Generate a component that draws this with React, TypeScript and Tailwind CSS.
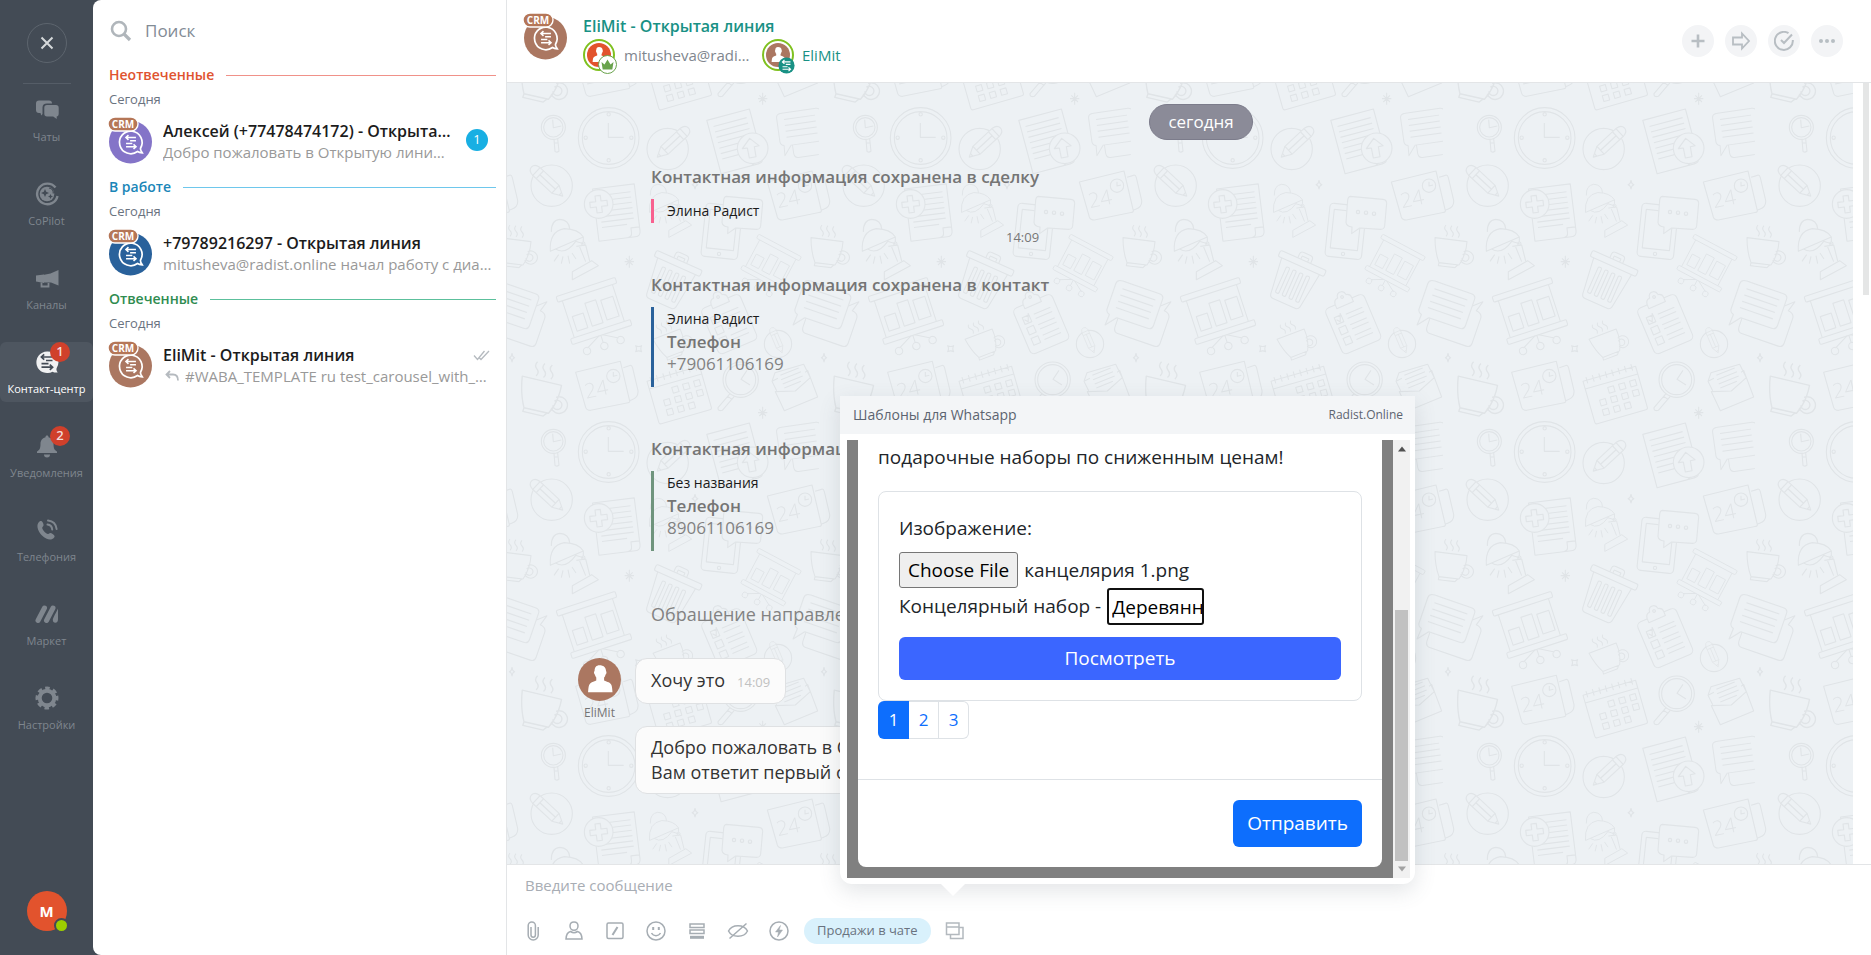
import { useRef, useState } from 'react';
import type { ReactNode } from 'react';

/* ---------- Icons ---------- */

function SearchIcon() {
  return (
    <svg width="22" height="22" viewBox="0 0 22 22" fill="none" stroke="#b0b6bb" strokeWidth="2.6">
      <circle cx="9" cy="9" r="7" />
      <path d="M14 14l6 6" strokeWidth="3.2" />
    </svg>
  );
}

function LinesArrows() {
  return <path d="M-5.5-5H5.5M-2.8-7.600l-2.800 2.600 2.800 2.600M-1-1.500H5.500M-5.500 1.700H1.500M-5.500 5.200H5.500M2.800 2.600l2.800 2.600-2.800 2.600" />;
}

function LineAvatar({ color }: { color: string }) {
  return (
    <svg width="46" height="48" viewBox="0 0 46 48" className="shrink-0">
      <circle cx="24.5" cy="26" r="21.5" fill={color} />
      <g transform="translate(25 26)" fill="none" stroke="#fff" strokeWidth="1.7">
        <path d="M6.500 9.500A11.300 11.300 0 1 1 9.600 6c-.6 1.200.4 3 1.600 4.800-1.900 0-3.400-.3-4.700-1.300z" />
        <g transform="scale(.9)">
          <LinesArrows />
        </g>
      </g>
      <rect x="2" y="1" width="30" height="14" rx="7" fill="#b57657" stroke="#fff" strokeWidth="1.400" />
      <text x="17" y="12" textAnchor="middle" fontSize="10" fontWeight="700" fill="#fff" fontFamily="'Open Sans', sans-serif">
        CRM
      </text>
    </svg>
  );
}

function Person({ color, size }: { color: string; size: number }) {
  return (
    <svg width={size} height={size} viewBox="0 0 44 44">
      <circle cx="22" cy="22" r="22" fill={color} />
      <path
        d="M22 7.500c-3.300 0-5 2.200-5 5.400 0 1-.8 1-.6 2.400.1 1 .8 1.300 1 2 .5 1.500.8 2 1.300 2.600v3c-3.300 1.500-6.400 2-7.300 4.600-.7 2-.9 4.500-1.100 7.500h25c-.2-3-.4-5.500-1.100-7.500-.9-2.600-4.200-3.100-7.500-4.600v-3c.8-.6 1-1.100 1.300-2.600.4-.7 1-1 1.100-2 .2-1.400-.5-1.400-.5-2.400 0-3.200-2.600-5.400-6.600-5.400z"
        fill="#fff"
      />
    </svg>
  );
}

const menuIcons: Record<string, ReactNode> = {
  chats: (
    <g fill="currentColor">
      <path d="M4 2.500h10c2 0 3 1 3 3H12c-3 0-4.500 1.500-4.500 4V16l-1.300 1.500L5.500 15H4c-2 0-3-1-3-3V5.500c0-2 1-3 3-3z" />
      <path d="M12 7h9c1.700 0 2.700 1 2.700 2.700v6c0 1.700-.8 2.500-2 2.800V21l-3.500-2.500H12c-1.700 0-2.700-1-2.700-2.800v-6C9.300 8 10.300 7 12 7z" />
    </g>
  ),
  copilot: (
    <g>
      <path d="M20.500 5.500A10.300 10.300 0 1 0 22.500 14" fill="none" stroke="currentColor" strokeWidth="2.400" />
      <circle cx="12" cy="12" r="7.300" fill="currentColor" />
      <path d="M10 7l1.200 2.800L14 11l-2.800 1.200L10 15l-1.200-2.800L6 11l2.800-1.200zM15.500 12l.8 1.700 1.700.8-1.700.8-.8 1.700-.8-1.700-1.700-.8 1.700-.8z" fill="#434b55" />
      <path d="M14 6c3 .3 4.500 3 4.300 5.500" fill="none" stroke="#434b55" strokeWidth="1.200" />
    </g>
  ),
  channels: (
    <g fill="currentColor">
      <path d="M23.500 4v15.500L16 16.500H8V9l7.500-1.500z" />
      <path d="M1 9.500L9 8.500v8.500L1 15.500z" />
      <path d="M6.500 16.500v4h7v-3.500" fill="none" stroke="currentColor" strokeWidth="1.800" />
    </g>
  ),
  contact: (
    <g>
      <path d="M12 1.500a10.800 10.800 0 1 0 5.500 20.200c1.600 1 3.500 1 5.200.8-1.200-1.500-1.600-3-1-4.500A10.800 10.800 0 0 0 12 1.500z" fill="#f0f1f2" />
      <g transform="translate(12 12)" fill="none" stroke="#434b55" strokeWidth="1.700">
        <LinesArrows />
      </g>
    </g>
  ),
  bell: (
    <g fill="currentColor">
      <path d="M12 1.500c1 0 1.500.7 1.500 1.700 3.500.8 5 3.500 5 6.800 0 4.500 1 6 3.500 7.500v1.500H2v-1.500c2.500-1.500 3.500-3 3.500-7.500 0-3.300 1.500-6 5-6.800 0-1 .5-1.700 1.500-1.700z" />
      <path d="M9 20.500h6a3 3 0 0 1-6 0z" />
    </g>
  ),
  phone: (
    <g>
      <path d="M4.500 3.500C6 2.500 7 3 8 5c1 2 .6 3-.5 4-.8.7 0 2.500 1.700 4.500 1.800 2 3.500 3 4.500 2.200 1.300-1 2.300-1 4 .3 2 1.500 2.500 2.500 1.300 3.800-2.500 3-7.500 2.200-12-2.300C2.300 12.700.8 6.500 4.500 3.500z" fill="currentColor" />
      <path d="M12.500 6.500c3 .3 4.500 2 4.700 5M13 2.500c5 .5 8 3.500 8.600 8.500" fill="none" stroke="currentColor" strokeWidth="2" strokeLinecap="round" />
    </g>
  ),
  market: (
    <g stroke="currentColor" strokeWidth="5" strokeLinecap="round">
      <path d="M3 18.500L9.500 6M11.500 18.500L18 6" />
      <path d="M23 6.500v11c0 2-1.200 3.300-2.700 3.300s-2.500-1.200-2.500-3c0-1.800 4-8.300 5.200-11.300z" fill="currentColor" stroke="none" />
    </g>
  ),
  gear: (
    <g fill="none" stroke="currentColor">
      <circle cx="12" cy="12" r="7.300" strokeWidth="4" />
      <circle cx="12" cy="12" r="9.900" strokeWidth="3.200" strokeDasharray="4.400 3.375" transform="rotate(-12 12 12)" />
    </g>
  ),
};

/* ---------- Chat wallpaper ---------- */

const BG = '#edf1f4';

function Wallpaper() {
  return (
    <svg className="absolute inset-0 h-full w-full" aria-hidden="true">
      <defs>
        <g id="wp-pencil">
          <path fill={BG} d="M-48-16H32L62 0 32 16H-48Q-66 14-66 0T-48-16z" />
          <path d="M-46-16v32M-32-16v32M32-16v32M-32 0H32M52-5v10" />
        </g>
        <g id="wp-cup">
          <path d="M-48-42L48-30Q45 10 24 40L-36 33Q-48 0-48-42zM-36 33l-2 9 50 6 8-8M38 0a20 20 0 1 1-9 26M35 10a11 11 0 1 1-3 10M-15-80q-8 9 0 17t0 17M3-78q-8 9 0 17t0 17M21-76q-8 9 0 17t0 17" />
        </g>
        <g id="wp-sheet">
          <path d="M781 297L915 264 943 383Q944 387 938 388L826 411Q814 411 811 402zM924 283l22-7q4 0 6 8l16 68q2 20-18 27l-8 3" />
          <circle cx="894" cy="308" r="20" />
          <path d="M894 296v13l12-3" />
          <text x="813" y="376" transform="rotate(-12 813 376)" fontSize="62" fontWeight="300" fill="#e0e4e7" stroke="none" fontFamily="'Open Sans', sans-serif">
            24
          </text>
        </g>
        <g id="wp-board">
          <rect x="-94" y="-76" width="186" height="18" rx="4" />
          <path d="M-80-58V58M78-58V58M-8 76l-44 24M-2 76v24M4 76l42 24" />
          <rect x="-92" y="58" width="188" height="18" rx="4" />
          <rect x="-66" y="-4" width="34" height="46" />
          <rect x="-18" y="-30" width="34" height="72" />
          <rect x="30" y="-24" width="38" height="62" />
          <circle cx="-56" cy="108" r="11" />
          <circle cx="-2" cy="110" r="11" />
          <circle cx="50" cy="108" r="11" />
        </g>
        <g id="wp-bubbles">
          <path d="M68-20l30-26-10 32q20 2 20 18v78q0 14-14 14H-22q-14 0-14-18V52" />
          <path fill={BG} d="M-58-58H58q14 0 14 14v82q0 14-14 14H-40L-66 84l2-34q-12-3-12-14v-80q0-14 18-14z" />
          <path d="M-52-36H52M-52-16H52M-52 4H52M-52 24H52" />
        </g>
        <g id="wp-doc">
          <path d="M-60-80H66V62q0 16-16 16H-60zM66 50H40v14q0 14-14 14M-46-58H52M-46-42H52M-46-26H52M-46-10H52M-46 6H52M-46 22H52M-46 38H30" />
        </g>
        <g id="wp-lamp">
          <path d="M130 505Q126 445 172 437 214 438 229 462zM133 447Q132 412 158 409 186 410 188 438M146 498q30 20 62-25M205 475l25 7M229 462v15M208 490l28-4 12 48M218 492l18 44M196 590v-24l58-33 20 15zM155 515l-14 20M168 520l-5 22M183 518l5 24M195 510l12 18" />
          <circle cx="229" cy="482" r="5" />
        </g>
        <g id="wp-doodles">
          <circle cx="134" cy="308" r="62" />
          <use href="#wp-pencil" transform="translate(122 297) rotate(43)" />
          <use href="#wp-doc" transform="translate(326 390) rotate(-7)" />
          <circle cx="275" cy="363" r="43" fill={BG} />
          <path d="M267 338h16v17h18v16h-18v18h-16v-18h-18v-16h18z" transform="rotate(-7 275 363)" />
          <use href="#wp-lamp" />
          <use href="#wp-lamp" transform="translate(313 -56) scale(.88)" />
          <use href="#wp-sheet" />
          <use href="#wp-sheet" transform="translate(-575 571)" />
          <use href="#wp-cup" transform="translate(960 506)" />
          <use href="#wp-cup" transform="translate(100 938) rotate(6) scale(1.250)" />
          <use href="#wp-cup" transform="translate(494 782) rotate(-28) scale(.9)" />

          <g transform="translate(643 447) rotate(6)">
            <rect x="-54" y="-82" width="110" height="160" rx="12" />
            <rect x="-40" y="-64" width="82" height="116" />
            <circle cx="0" cy="66" r="5" />
          </g>
          <path fill={BG} d="M658 340l98 9q11 1 11 12l-6 68q-2 11-13 10l-62-4-24 17 1-20q-17-2-18-14l5-66q1-11 8-12z" />
          <circle cx="681" cy="387" r="5" />
          <circle cx="705" cy="389" r="5" />
          <circle cx="729" cy="392" r="5" />

          <g transform="translate(490 592) rotate(24)">
            <rect x="-74" y="-66" width="150" height="20" rx="6" />
            <path d="M-62-46l14 112q2 10 12 10h72q10 0 12-10L62-46M-18-66v-12q0-10 10-10h22q10 0 10 10v12M-8-66v-10H14v10" />
            <rect x="-38" y="-28" width="11" height="84" rx="4" />
            <rect x="-16" y="-28" width="11" height="84" rx="4" />
            <rect x="6" y="-28" width="11" height="84" rx="4" />
            <rect x="28" y="-28" width="11" height="84" rx="4" />
          </g>
          <use href="#wp-board" transform="translate(260 684) rotate(-18)" />
          <use href="#wp-board" transform="translate(792 540) rotate(28) scale(.78)" />

          <g transform="translate(665 722) rotate(-23)">
            <rect x="-62" y="-72" width="126" height="148" rx="14" />
            <path fill={BG} d="M-26-60v-14q2-14 14-14 2-14 14-14t14 14q12 2 12 14v14z" />
            <circle cx="2" cy="-86" r="4" />
            <path d="M-44-38h22v22h-22zM-44-4h22v22h-22zM-44 30h22v22h-22zM-40-30l8 10 10-24M-8-34H46M-8-20H46M-8 0H46M-8 14H46M-8 34H46M-8 48H46" />
          </g>
          <circle cx="813" cy="783" r="41" />
          <use href="#wp-pencil" transform="translate(810 773) rotate(67) scale(.64)" />
          <use href="#wp-bubbles" transform="translate(948 668) rotate(19)" />
          <use href="#wp-bubbles" transform="translate(882 1077) rotate(-8) scale(.9)" />

          <g transform="translate(516 932) rotate(-16)">
            <path d="M-82-62H82V66q0 6-6 6H-76q-6 0-6-6zM-82-38H82M-70-72v20M-50-72v20M-30-72v20M-10-72v20M10-72v20M30-72v20M50-72v20M70-72v20" />
            <path d="M-16-24h18v18h-18zM18-24h18v18H18zM52-24h18v18H52zM-50 6h18v18h-18zM-16 6h18v18h-18zM18 6h18v18H18zM52 6h18v18H52zM-50 36h18v18h-18zM-16 36h18v18h-18zM18 36h18v18H18z" />
          </g>
          <circle cx="701" cy="890" r="53" />
          <circle cx="701" cy="890" r="45" />
          <path d="M720 862l-18 27 27 17M669 932l-36 42q-1 12 13 8l36-42M662 940l14 10" />
          <circle cx="139" cy="1075" r="36" />
          <circle cx="139" cy="1075" r="29" />
          <path d="M137 1052l2 24 24-5M141 1111l3 36q6 5 12-1l-4-36M143 1122h11" />
          <circle cx="305" cy="1107" r="91" />
          <circle cx="305" cy="1107" r="79" />
          <circle cx="305" cy="1036" r="5" />
          <circle cx="305" cy="1174" r="5" />
          <circle cx="236" cy="1106" r="5" />
          <circle cx="373" cy="1106" r="5" />
          <path d="M304 1062v43h46" />
          <circle cx="482" cy="1140" r="62" />
          <use href="#wp-pencil" transform="translate(496 1122) rotate(137)" />
          <use href="#wp-doc" transform="translate(682 1119) rotate(-15) scale(1.050)" />
          <circle cx="737" cy="1138" r="46" fill={BG} />
          <path d="M728 1108l28 22-14 3 5 30-20 4-6-30-15 2z" />
          <path d="M795 895l18-9M809 923l-14-28 9-26 86-25 20 40-45 40-60 2 27 57 100-41-30-80-8 6M822 890l60-24M827 903l60-24M820 877l55-22M832 915l50-20" />

          <path d="M564 292q1 11 9 13-8 2-9 13-1-11-9-13 8-2 9-13zM951 811q1 11 8 13-7 2-8 13-1-11-8-13 7-2 8-13zM386 788q9 5 18 0-5 9 0 18-9-5-18 0 5-9 0-18zM367 518v36M353 536h28M357 526l20 20M377 526l-20 20M767 971v36M753 989h28M757 979l20 20M777 979l-20 20" />
        </g>
        <pattern id="wp-tile" x="69" y="249" width="936" height="942" patternUnits="userSpaceOnUse" patternTransform="translate(-23 -83) scale(.33333)">
          <g fill="none" stroke="#e0e4e7" strokeWidth="3.300" strokeLinejoin="round">
            <use href="#wp-doodles" />
            <use href="#wp-doodles" x="-936" />
            <use href="#wp-doodles" x="936" />
            <use href="#wp-doodles" y="-942" />
            <use href="#wp-doodles" y="942" />
          </g>
        </pattern>
      </defs>
      <rect width="100%" height="100%" fill={BG} />
      <rect width="100%" height="100%" fill="url(#wp-tile)" />
    </svg>
  );
}

/* ---------- Left menu ---------- */

const menu = [
  { icon: 'chats', label: 'Чаты' },
  { icon: 'copilot', label: 'CoPilot' },
  { icon: 'channels', label: 'Каналы' },
  { icon: 'contact', label: 'Контакт-центр', count: 1, active: true },
  { icon: 'bell', label: 'Уведомления', count: 2 },
  { icon: 'phone', label: 'Телефония' },
  { icon: 'market', label: 'Маркет' },
  { icon: 'gear', label: 'Настройки' },
];

function Sidebar() {
  return (
    <nav className="flex w-[93px] shrink-0 flex-col items-center pt-[23px] pb-6">
      <button aria-label="Закрыть" className="flex h-10 w-10 shrink-0 items-center justify-center rounded-full border border-[#5d656e]">
        <svg width="14" height="14" viewBox="0 0 14 14" stroke="#d5d8da" strokeWidth="2">
          <path d="M1.500 1.500l11 11M12.500 1.500l-11 11" />
        </svg>
      </button>
      <div className="mt-5 mb-[6px] h-px w-12 bg-[#555d67]" />
      <ul className="flex w-full flex-col gap-6">
        {menu.map((item) => (
          <li key={item.label}>
            <a
              href="#"
              className={
                item.active
                  ? 'relative flex h-[60px] flex-col items-center rounded-md bg-[#4e5660] pt-2 text-white'
                  : 'relative flex h-[60px] flex-col items-center pt-2 text-[#7f868e]'
              }
            >
              <svg width="24" height="24" viewBox="0 0 24 24">
                {menuIcons[item.icon]}
              </svg>
              <span className="mt-[7px] text-[11px] leading-4 whitespace-nowrap">{item.label}</span>
              {item.count && (
                <span className="absolute top-0 left-[50px] flex h-5 w-5 items-center justify-center rounded-full bg-[#d0402b] text-[13px] font-semibold text-[#f3dcd9]">
                  {item.count}
                </span>
              )}
            </a>
          </li>
        ))}
      </ul>
      <button className="relative mt-auto flex h-10 w-10 items-center justify-center rounded-full bg-[#e2532d] text-[15px] font-bold text-white">
        M
        <span className="absolute -right-[2px] -bottom-[2px] h-[15px] w-[15px] rounded-full border-2 border-[#434b55] bg-[#9dcf00]" />
      </button>
    </nav>
  );
}

/* ---------- Dialog list ---------- */

const groups = [
  {
    title: 'Неотвеченные',
    titleClass: 'text-[#e0532f]',
    lineClass: 'bg-[#f09189]',
    color: '#8474c8',
    name: 'Алексей (+77478474172) - Открытая линия',
    text: 'Добро пожаловать в Открытую линию компании!',
    unread: 1,
  },
  {
    title: 'В работе',
    titleClass: 'text-[#1a86b8]',
    lineClass: 'bg-[#6ec7ec]',
    color: '#29619b',
    name: '+79789216297 - Открытая линия',
    text: 'mitusheva@radist.online начал работу с диалогом',
  },
  {
    title: 'Отвеченные',
    titleClass: 'text-[#2f8c50]',
    lineClass: 'bg-[#5cc09c]',
    color: '#ab7761',
    name: 'EliMit - Открытая линия',
    text: '#WABA_TEMPLATE ru test_carousel_with_params',
    own: true,
  },
];

function DialogList() {
  return (
    <aside className="flex w-[414px] shrink-0 flex-col rounded-l-lg border-r border-[#e3e5e7] bg-white">
      <label className="flex h-[61px] items-center gap-[13px] pl-[17px]">
        <SearchIcon />
        <input type="search" placeholder="Поиск" aria-label="Поиск" className="min-w-0 flex-1 text-[17px] outline-none placeholder:text-[#828b95]" />
      </label>
      {groups.map((g) => (
        <section key={g.title} className="mt-1 mb-[9px] pl-4">
          <div className="flex h-5 items-center gap-3 pr-[10px]">
            <h2 className={`text-sm font-semibold ${g.titleClass}`}>{g.title}</h2>
            <div className={`h-px flex-1 ${g.lineClass}`} />
          </div>
          <div className="mt-[6px] text-[13px] leading-4 text-[#6a737f]">Сегодня</div>
          <a href="#" className="-ml-[3px] mt-[9px] flex h-12 items-center gap-[11px] pr-[14px]">
            <LineAvatar color={g.color} />
            <div className="min-w-0 flex-1 pt-[2px]">
              <div className="flex items-center justify-between">
                <span className="truncate text-base leading-[22px] font-semibold text-[#1c1c1c]">{g.name}</span>
                {g.own && (
                  <svg width="17" height="11" viewBox="0 0 17 11" fill="none" stroke="#b5babf" strokeWidth="1.300" className="mr-[2px] shrink-0">
                    <path d="M1 5.500l3.500 4L11.500 1M6.500 8l1.500 1.500L16 1" />
                  </svg>
                )}
              </div>
              <div className="flex items-center gap-[6px]">
                {g.own && (
                  <svg width="14" height="12" viewBox="0 0 14 12" fill="none" stroke="#b5babf" strokeWidth="1.800" className="ml-[2px] shrink-0">
                    <path d="M5 1L1.500 4.500 5 8M1.500 4.500H8c3 0 5 2 5 6" />
                  </svg>
                )}
                <span className="truncate text-[15px] leading-5 text-[#999]">{g.text}</span>
              </div>
            </div>
            {g.unread && (
              <span className="mr-1 flex h-[22px] w-[22px] shrink-0 items-center justify-center rounded-full bg-[#18afe3] text-[13px] text-white">
                {g.unread}
              </span>
            )}
          </a>
        </section>
      ))}
    </aside>
  );
}

/* ---------- Chat ---------- */

function HeaderButton({ label, children }: { label: string; children: ReactNode }) {
  return (
    <button aria-label={label} className="flex h-8 w-8 items-center justify-center rounded-full bg-[#f3f4f6]">
      <svg width="20" height="20" viewBox="0 0 20 20" fill="none" stroke="#b8bec3" strokeWidth="2">
        {children}
      </svg>
    </button>
  );
}

function ChatHeader() {
  return (
    <header className="flex h-[83px] shrink-0 items-center justify-between border-b border-[#e3e5e7] bg-white pr-7 pl-[14px]">
      <div className="flex items-start gap-4">
        <LineAvatar color="#ab7761" />
        <div>
          <h1 className="pt-px text-base leading-[26px] font-semibold text-[#199185]">EliMit - Открытая линия</h1>
          <div className="flex h-8 items-center">
            <span className="relative mr-[9px] rounded-full border-2 border-[#7fc11f] p-[2px]">
              <Person color="#e2532d" size={24} />
              <span className="absolute -right-1 -bottom-[5px] flex h-[19px] w-[19px] items-center justify-center rounded-full border border-[#6aa34d] bg-white">
                <svg width="13" height="11" viewBox="0 0 13 11" fill="#6aa34d">
                  <path d="M.5 3l3 2.500L6.500.5l3 5 3-2.500-1.200 7.500H1.700z" />
                </svg>
              </span>
            </span>
            <a href="#" className="w-[130px] truncate pt-px text-[15px] text-[#80868e]">
              mitusheva@radist.online
            </a>
            <span className="relative mr-2 ml-[8px] rounded-full border-2 border-[#7fc11f] p-[2px]">
              <Person color="#ab7761" size={24} />
              <svg width="17" height="17" viewBox="-10 -10 20 20" className="absolute -right-[3px] -bottom-[5px]" fill="none" stroke="#fff" strokeWidth="1.600">
                <circle r="9.500" fill="#199185" stroke="none" />
                <g transform="scale(.85)">
                  <LinesArrows />
                </g>
              </svg>
            </span>
            <a href="#" className="pt-px text-[15px] text-[#199185]">
              EliMit
            </a>
          </div>
        </div>
      </div>
      <div className="flex gap-[11px]">
        <HeaderButton label="Добавить">
          <path d="M10 3.500v13M3.500 10h13" strokeWidth="2.600" />
        </HeaderButton>
        <HeaderButton label="Перенаправить">
          <path d="M2 6.500h9v-4l7 7.500-7 7.500v-4H2z" strokeWidth="1.800" />
        </HeaderButton>
        <HeaderButton label="Завершить">
          <path d="M14.500 2.200A9 9 0 1 0 18.800 9M7 9l3 3 8-8.500" />
        </HeaderButton>
        <HeaderButton label="Ещё">
          <g fill="#b8bec3" stroke="none">
            <circle cx="4" cy="10" r="2" />
            <circle cx="10" cy="10" r="2" />
            <circle cx="16" cy="10" r="2" />
          </g>
        </HeaderButton>
      </div>
    </header>
  );
}

function SystemMessage({ title, barClass, name, phone }: { title: string; barClass: string; name: string; phone?: string }) {
  return (
    <article className="w-fit">
      <h3 className="text-[17px] leading-6 font-semibold text-[#757575]">{title}</h3>
      <div className={`mt-[10px] border-l-[3px] pl-[13px] ${barClass}`}>
        <p className="text-sm leading-6 text-[#1a1a1a]">{name}</p>
        {phone && (
          <p className="pb-3 text-[17px] leading-[22px] text-[#828282]">
            <b className="font-semibold text-[#757575]">Телефон</b>
            <br />
            {phone}
          </p>
        )}
      </div>
      <time className="block pt-[6px] text-right text-[13px] leading-4 text-[#777]">14:09</time>
    </article>
  );
}

function Messages() {
  return (
    <div className="relative min-h-0 flex-1 overflow-hidden bg-white">
      <div className="relative mr-[18px] h-full overflow-hidden">
        <Wallpaper />
        <div className="relative pt-[21px]">
          <div className="pl-[42px]">
            <div className="mx-auto w-fit rounded-full border border-[#7c7c8b] bg-[#8b8b98] px-[18px] py-[5px] text-[17px] leading-6 text-white">сегодня</div>
          </div>
          <div className="mt-[25px] flex flex-col items-start gap-7 pl-[144px]">
            <SystemMessage title="Контактная информация сохранена в сделку" barClass="border-[#f8618f]" name="Элина Радист" />
            <SystemMessage title="Контактная информация сохранена в контакт" barClass="border-[#29619b]" name="Элина Радист" phone="+79061106169" />
            <SystemMessage title="Контактная информация сохранена в сделку" barClass="border-[#6f947d]" name="Без названия" phone="89061106169" />
            <p className="text-lg leading-[26px] text-[#828282]">Обращение направлено на EliMit</p>
          </div>
          <div className="mt-[31px] flex items-start gap-[14px] pl-[71px]">
            <div className="flex flex-col items-center">
              <Person color="#ab7761" size={43} />
              <span className="mt-1 text-xs leading-4 text-[#757575]">EliMit</span>
            </div>
            <div className="flex flex-col items-start gap-[22px]">
              <p className="flex items-baseline gap-3 rounded-xl border border-[#dfe1e3] bg-[#fbfbfb] px-[15px] py-2 text-lg leading-[26px] text-[#333]">
                Хочу это <time className="text-[13px] text-[#c1c1c1]">14:09</time>
              </p>
              <p className="rounded-xl border border-[#dfe1e3] bg-[#fbfbfb] px-[15px] py-2 text-lg leading-[25px] text-[#333]">
                Добро пожаловать в Открытую линию!
                <br />
                Вам ответит первый освободившийся оператор.
              </p>
            </div>
          </div>
        </div>
      </div>
      <div className="absolute top-0 right-[2px] h-[212px] w-[6px] bg-[#e5e6e6]" />
    </div>
  );
}

function ToolButton({ label, children }: { label: string; children: ReactNode }) {
  return (
    <button aria-label={label} className="h-6 w-6">
      <svg width="24" height="24" viewBox="0 0 24 24" fill="none" stroke="currentColor" strokeWidth="1.500">
        {children}
      </svg>
    </button>
  );
}

function Composer() {
  return (
    <footer className="h-[91px] shrink-0 border-t border-[#e3e5e7] bg-white pl-[14px]">
      <textarea
        aria-label="Введите сообщение"
        placeholder="Введите сообщение"
        rows={1}
        className="mt-2 block h-6 w-full resize-none pl-1 text-[15px] leading-6 outline-none placeholder:text-[#a8adb4]"
      />
      <div className="mt-[21px] flex h-[26px] items-center">
        <div className="flex gap-[17px] text-[#a6adb3]">
          <ToolButton label="Файл">
            <path d="M10 8v8a2.200 2.200 0 0 0 4.400 0V6.500a3.600 3.600 0 0 0-7.200 0V16a5 5 0 0 0 10 0V8" />
          </ToolButton>
          <ToolButton label="Упомянуть">
            <path d="M12 3c2.500 0 4 1.800 4 4s-1.500 4.300-4 4.300S8 9.200 8 7s1.500-4 4-4zM8.500 12.500C5.500 13.200 4.200 15 4 20h16c-.2-5-1.500-6.800-4.500-7.500-2 1.300-5 1.300-7 0z" />
          </ToolButton>
          <ToolButton label="Команды">
            <rect x="4" y="4" width="16" height="15.500" rx="1.500" />
            <path d="M14.500 8l-5 8" strokeWidth="2" />
          </ToolButton>
          <ToolButton label="Смайлы">
            <circle cx="12" cy="12" r="9" />
            <path d="M7.500 14c2 3.500 7 3.500 9 0" />
            <path d="M9.200 8v3M14.800 8v3" strokeWidth="2" />
          </ToolButton>
          <ToolButton label="Формы">
            <rect x="5" y="5" width="14" height="3.500" />
            <rect x="5" y="11" width="14" height="3.500" />
            <path d="M5 18.300h14" strokeWidth="3" />
          </ToolButton>
          <ToolButton label="Скрытый режим">
            <path d="M2.500 12C6 5 18 5 21.500 12 18 19 6 19 2.500 12zM20.500 4.500l-17 15" />
          </ToolButton>
          <ToolButton label="Быстрые ответы">
            <circle cx="12" cy="12" r="9" />
            <path d="M13.500 6.500L8.500 13h3l-1 5 5-7h-3.300z" fill="currentColor" strokeWidth=".5" />
          </ToolButton>
        </div>
        <button className="ml-[13px] h-[26px] rounded-full bg-[#d9f1fc] px-[13px] text-[13px] whitespace-nowrap text-[#6a737f]">Продажи в чате</button>
        <div className="ml-3 flex text-[#b3b9be]">
          <ToolButton label="Шаблоны для Whatsapp">
            <path d="M3.500 4H16v11.500H3.500zM3.500 8H16M16 8.500h4V19.500H7.500v-4" />
          </ToolButton>
        </div>
      </div>
    </footer>
  );
}

/* ---------- Templates popup ---------- */

function TemplatePopup() {
  const fileRef = useRef<HTMLInputElement>(null);
  const [item, setItem] = useState('Деревянный');
  const [page, setPage] = useState(1);

  return (
    <div className="absolute bottom-[71px] left-[333px] w-[575px] rounded-b-xl bg-white shadow-[0_7px_21px_rgba(83,92,105,0.16)]">
      <div className="flex h-[38px] items-center justify-between bg-[#f3f5f7] pr-3 pl-[13px] text-[#5c6470]">
        <span className="text-sm">Шаблоны для Whatsapp</span>
        <span className="text-xs">Radist.Online</span>
      </div>
      <div className="flex py-[6px] pr-[5px] pl-[7px]">
        <div className="min-w-0 flex-1 bg-[#808080] px-[11px] pb-[11px] text-[19px] text-[#212529]">
          <div className="rounded-b-lg bg-white">
            <div className="px-5 pt-[3px] pb-10">
              <p className="leading-7">подарочные наборы по сниженным ценам!</p>
              <div className="mt-5 rounded-lg border border-[#dee2e6] px-5 pt-6 pb-5">
                <label htmlFor="tpl-file" className="block leading-6">
                  Изображение:
                </label>
                <div className="mt-3 flex items-center gap-[6px]">
                  <input ref={fileRef} id="tpl-file" type="file" className="hidden" />
                  <button onClick={() => fileRef.current?.click()} className="h-9 rounded-[3px] border border-[#767676] bg-[#efefef] px-2 text-black">
                    Choose File
                  </button>
                  <span>канцелярия 1.png</span>
                </div>
                <div className="flex items-center gap-[6px]">
                  <label htmlFor="tpl-item">Концелярный набор -</label>
                  <input
                    id="tpl-item"
                    value={item}
                    onChange={(e) => setItem(e.target.value)}
                    className="h-[37px] w-[97px] rounded-[3px] border-2 border-[#101010] pr-0 pl-[3px] text-black outline-none"
                  />
                </div>
                <button className="mt-3 h-[43px] w-full rounded-md bg-[#3b66ff] text-white">Посмотреть</button>
              </div>
              <div className="flex text-[17px]">
                {[1, 2, 3].map((n) => (
                  <button
                    key={n}
                    onClick={() => setPage(n)}
                    className={
                      n === page
                        ? 'h-[38px] w-[31px] bg-[#0d6efd] text-white first:rounded-l-md last:rounded-r-md'
                        : 'h-[38px] w-[30px] border-y border-r border-[#dee2e6] text-[#0d6efd] first:rounded-l-md last:rounded-r-md'
                    }
                  >
                    {n}
                  </button>
                ))}
              </div>
            </div>
            <div className="flex justify-end border-t border-[#dee2e6] p-5">
              <button className="h-[47px] rounded-md bg-[#0d6efd] px-[14px] text-white">Отправить</button>
            </div>
          </div>
        </div>
        <div className="flex w-[17px] shrink-0 flex-col items-center bg-[#f1f1f1] py-[6px]">
          <svg width="8" height="6" viewBox="0 0 8 6" fill="#505050">
            <path d="M0 5.500l4-5 4 5z" />
          </svg>
          <div className="mt-auto mb-[5px] h-[251px] w-[13px] bg-[#c1c1c1]" />
          <svg width="8" height="6" viewBox="0 0 8 6" fill="#a3a3a3">
            <path d="M0 .5l4 5 4-5z" />
          </svg>
        </div>
      </div>
      <svg width="24" height="12" viewBox="0 0 24 12" className="absolute top-full left-[101px]" fill="#fff">
        <path d="M0 0h24L12 12z" />
      </svg>
    </div>
  );
}

export default function App() {
  return (
    <div className="flex h-screen bg-[#434b55] font-['Open_Sans','Noto_Sans',sans-serif]">
      <Sidebar />
      <DialogList />
      <main className="relative flex min-w-0 flex-1 flex-col bg-white">
        <ChatHeader />
        <Messages />
        <Composer />
        <TemplatePopup />
      </main>
    </div>
  );
}
